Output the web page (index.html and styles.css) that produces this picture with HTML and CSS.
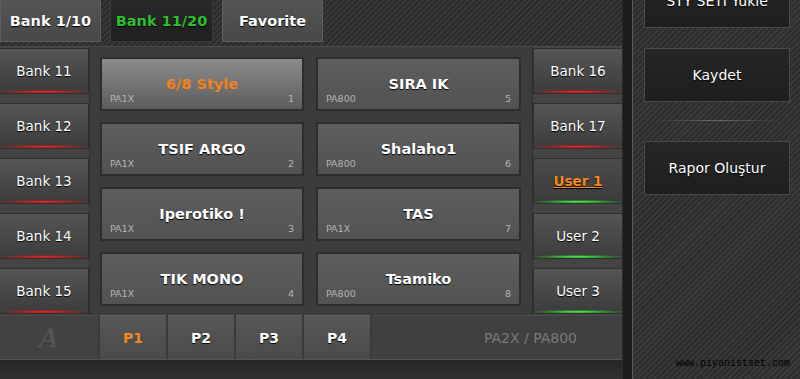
FILE: index.html
```html
<!DOCTYPE html>
<html lang="tr">
<head>
    <meta charset="UTF-8">
    <meta name="viewport" content="width=device-width, initial-scale=1.0">
    <title>Style Bankası</title>
    <link rel="stylesheet" href="styles.css">
</head>
<body>
    <div class="app">
        <div class="main">
            <!-- Bank grupları -->
            <div class="tabs">
                <div class="tab">Bank 1/10</div>
                <div class="tab active">Bank 11/20</div>
                <div class="tab">Favorite</div>
            </div>

            <div class="panel">
                <div class="bank-col left">
                    <div class="bank red">Bank 11</div>
                    <div class="bank red">Bank 12</div>
                    <div class="bank red">Bank 13</div>
                    <div class="bank red">Bank 14</div>
                    <div class="bank red">Bank 15</div>
                </div>

                <div class="grid">
                    <div class="card selected"><div class="title">6/8 Style</div><div class="meta"><span>PA1X</span><span>1</span></div></div>
                    <div class="card"><div class="title">SIRA IK</div><div class="meta"><span>PA800</span><span>5</span></div></div>
                    <div class="card"><div class="title">TSIF ARGO</div><div class="meta"><span>PA1X</span><span>2</span></div></div>
                    <div class="card"><div class="title">Shalaho1</div><div class="meta"><span>PA800</span><span>6</span></div></div>
                    <div class="card"><div class="title">Iperotiko !</div><div class="meta"><span>PA1X</span><span>3</span></div></div>
                    <div class="card"><div class="title">TAS</div><div class="meta"><span>PA1X</span><span>7</span></div></div>
                    <div class="card"><div class="title">TIK MONO</div><div class="meta"><span>PA1X</span><span>4</span></div></div>
                    <div class="card"><div class="title">Tsamiko</div><div class="meta"><span>PA800</span><span>8</span></div></div>
                </div>

                <div class="bank-col right">
                    <div class="bank red">Bank 16</div>
                    <div class="bank red">Bank 17</div>
                    <div class="bank green current"><u>User 1</u></div>
                    <div class="bank green">User 2</div>
                    <div class="bank green">User 3</div>
                </div>
            </div>

            <!-- Sayfalar -->
            <div class="pages">
                <div class="logo">A</div>
                <div class="page on">P1</div>
                <div class="page">P2</div>
                <div class="page">P3</div>
                <div class="page">P4</div>
                <div class="model">PA2X / PA800</div>
            </div>
            <div class="footer"></div>
        </div>

        <div class="divider"></div>

        <div class="side">
            <div class="side-btn top">STY SETİ Yükle</div>
            <div class="side-btn">Kaydet</div>
            <div class="sep"></div>
            <div class="side-btn">Rapor Oluştur</div>
        </div>

        <div class="watermark">www.piyanistset.com</div>
    </div>
</body>
</html>
```

FILE: styles.css
```css
body {
    margin: 0;
    padding: 0;
    background-color: #2b2b2b;
    font-family: "DejaVu Sans", Verdana, sans-serif;
    color: #ffffff;
    overflow: hidden;
}
.app {
    position: relative;
    display: flex;
    width: 800px;
    height: 379px;
    overflow: hidden;
}
.main {
    width: 622px;
    display: flex;
    flex-direction: column;
}

/* ust sekmeler */
.tabs {
    height: 46px;
    display: flex;
    gap: 9px;
    background: repeating-linear-gradient(135deg, #2c2c2c 0 2px, #383838 2px 4px);
}
.tab {
    width: 99px;
    height: 41px;
    display: flex;
    align-items: center;
    justify-content: center;
    font-size: 14.5px;
    font-weight: bold;
    background: linear-gradient(#555555, #484848);
    border: 1px solid #5e5e5e;
    border-top: none;
    text-shadow: 0 1px 1px #000;
}
.tab.active {
    width: 101px;
    color: #2fbf2f;
    background: linear-gradient(#2a2a2a, #1f1f1f);
    border-color: #3a3a3a;
}

.panel {
    height: 269px;
    display: flex;
    background-color: #3c3c3c;
    border-top: 1px solid #4a4a4a;
    box-sizing: border-box;
}
.bank-col {
    width: 89px;
    display: flex;
    flex-direction: column;
    gap: 9px;
    padding-top: 1px;
    background-color: #444444;
}
.bank-col.left {
    border-right: 1px solid #2e2e2e;
}
.bank-col.right {
    border-left: 1px solid #2e2e2e;
}
.bank {
    position: relative;
    height: 46px;
    display: flex;
    align-items: center;
    justify-content: center;
    font-size: 13.5px;
    background: linear-gradient(#555555, #3c3c3c);
    border: 1px solid #2f2f2f;
    border-left: none;
    box-sizing: border-box;
    text-shadow: 0 1px 1px #000;
}
.bank-col.right .bank {
    border-left: 1px solid #2f2f2f;
    border-right: none;
}
.bank::after {
    content: "";
    position: absolute;
    left: 0;
    right: 0;
    bottom: 0;
    height: 4px;
}
.bank.red::after {
    background: radial-gradient(ellipse 55% 50% at 50% 70%, #ff2424, rgba(220, 20, 20, 0.5) 60%, rgba(200, 20, 20, 0) 100%);
}
.bank.green::after {
    background: radial-gradient(ellipse 55% 50% at 50% 70%, #4dff4d, rgba(40, 210, 40, 0.5) 60%, rgba(40, 210, 40, 0) 100%);
}
.bank.current {
    font-weight: bold;
    color: #f08a1e;
    background: linear-gradient(#4c4c4c, #3a3a3a);
}

.grid {
    flex: 1;
    display: grid;
    grid-template-columns: 204px 205px;
    grid-auto-rows: 54px;
    column-gap: 12px;
    row-gap: 11px;
    padding: 10px 0 0 10px;
}
.card {
    display: flex;
    flex-direction: column;
    background: linear-gradient(#5e5e5e, #525252);
    border: 2px solid #2d2d2d;
    box-sizing: border-box;
    padding: 16px 8px 4px;
}
.card.selected {
    background: linear-gradient(#8c8c8c, #5c5c5c);
}
.card .title {
    flex: 1;
    display: flex;
    align-items: center;
    justify-content: center;
    font-size: 14.5px;
    font-weight: bold;
    text-shadow: 0 1px 1px #000;
}
.card.selected .title {
    color: #f0821e;
    text-shadow: none;
}
.card .meta {
    display: flex;
    justify-content: space-between;
    font-size: 9.5px;
    color: #b4b4b4;
    line-height: 12px;
}

/* sayfa cubugu */
.pages {
    height: 45px;
    display: flex;
    gap: 2px;
    background-color: #3a3a3a;
    border-bottom: 1px solid #555555;
    box-sizing: border-box;
}
.logo {
    width: 98px;
    display: flex;
    align-items: center;
    justify-content: center;
    font-family: "DejaVu Serif", serif;
    font-style: italic;
    font-size: 26px;
    color: #575757;
    background-color: #424242;
    border-top: 1px solid #4c4c4c;
}
.page {
    width: 66px;
    display: flex;
    align-items: center;
    justify-content: center;
    font-size: 14px;
    font-weight: bold;
    background: linear-gradient(#575757, #4a4a4a);
    border-top: 1px solid #666666;
    text-shadow: 0 1px 1px #000;
}
.page.on {
    color: #f08a1e;
    text-shadow: none;
}
.model {
    flex: 1;
    display: flex;
    align-items: center;
    justify-content: flex-end;
    padding-right: 45px;
    font-size: 14px;
    color: #7a7a7a;
    background-color: #404040;
    border-top: 1px solid #4c4c4c;
}
.footer {
    flex: 1;
    background: linear-gradient(#262626, #303030);
}

.divider {
    width: 9px;
    background-color: #1c1c1c;
    border-left: 1px solid #2a2a2a;
    border-right: 1px solid #5a5a5a;
}

/* sag panel */
.side {
    flex: 1;
    display: flex;
    flex-direction: column;
    padding: 0 10px 0 11px;
    background: repeating-linear-gradient(135deg, #2d2d2d 0 2px, #393939 2px 4px);
}
.side-btn {
    height: 54px;
    display: flex;
    align-items: center;
    justify-content: center;
    font-size: 14px;
    background: linear-gradient(#262626, #1e1e1e);
    border: 1px solid #4a4a4a;
    box-sizing: border-box;
    margin-bottom: 20px;
    text-shadow: 0 1px 1px #000;
}
.side-btn.top {
    margin-top: -26px;
}
.sep {
    height: 1px;
    margin: -2px 10px 20px;
    background: linear-gradient(90deg, rgba(110, 110, 110, 0), #6a6a6a, rgba(110, 110, 110, 0));
}

.watermark {
    position: absolute;
    right: 10px;
    bottom: 10px;
    font-family: "Liberation Mono", monospace;
    font-size: 10px;
    color: #000000;
}
```
